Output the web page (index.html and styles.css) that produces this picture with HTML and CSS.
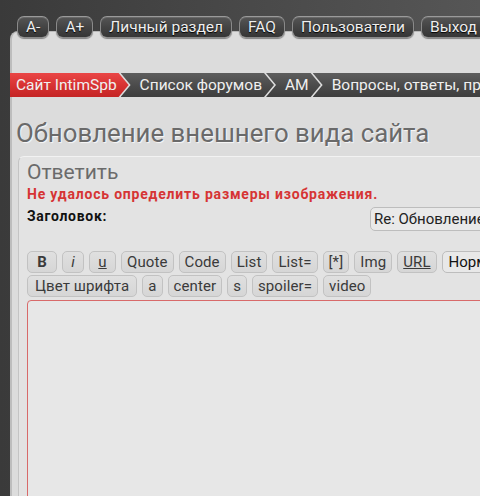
FILE: index.html
```html
<!DOCTYPE html>
<html lang="ru">
<head>
<meta charset="utf-8">
<title>Обновление внешнего вида сайта</title>
<link rel="stylesheet" href="styles.css">
</head>
<body>
<div class="page">
  <nav class="topnav">
    <a class="tab">A-</a>
    <a class="tab">A+</a>
    <a class="tab">Личный раздел</a>
    <a class="tab">FAQ</a>
    <a class="tab">Пользователи</a>
    <a class="tab">Выход</a>
  </nav>
  <div class="panel">
    <div class="crumbs">
      <a class="crumb crumb-home">Сайт IntimSpb</a>
      <a class="crumb">Список форумов</a>
      <a class="crumb">AM</a>
      <a class="crumb">Вопросы, ответы, предложения</a>
    </div>
    <h1 class="title">Обновление внешнего вида сайта</h1>
    <div class="formbox">
      <h2 class="formtitle">Ответить</h2>
      <div class="error">Не удалось определить размеры изображения.</div>
      <div class="field">
        <label class="label">Заголовок:</label>
        <div class="input">Re: Обновление внешнего вида сайта</div>
      </div>
      <div class="toolbar">
        <span class="btn btn-b">B</span>
        <span class="btn btn-i">i</span>
        <span class="btn btn-u">u</span>
        <span class="btn">Quote</span>
        <span class="btn">Code</span>
        <span class="btn">List</span>
        <span class="btn">List=</span>
        <span class="btn">[*]</span>
        <span class="btn">Img</span>
        <span class="btn btn-url">URL</span>
        <span class="select">Нормальный</span>
      </div>
      <div class="toolbar toolbar2">
        <span class="btn btn-wide">Цвет шрифта</span>
        <span class="btn">a</span>
        <span class="btn">center</span>
        <span class="btn">s</span>
        <span class="btn">spoiler=</span>
        <span class="btn">video</span>
      </div>
      <div class="textarea"></div>
    </div>
  </div>
</div>
</body>
</html>
```
FILE: styles.css
```css
html, body {
  margin: 0;
  padding: 0;
  height: 100%;
  overflow: hidden;
}
body {
  font-family: Roboto, "Noto Sans", "DejaVu Sans", sans-serif;
  background: linear-gradient(to right, #3a3a3a 0%, #474747 45%, #565656 100%);
}
.page {
  width: 480px;
  height: 496px;
  overflow: hidden;
}
.topnav {
  position: relative;
  z-index: 2;
  display: flex;
  gap: 7px;
  padding: 16px 0 0 17px;
  white-space: nowrap;
}
.tab {
  flex: none;
  display: block;
  height: 20px;
  line-height: 20px;
  padding: 0 8px;
  font-size: 15.5px;
  color: #efefef;
  text-shadow: 0 1px 1px #000;
  background: linear-gradient(#555 0%, #444 50%, #363636 100%);
  border: 1px solid #8a8a8a;
  border-top-color: #9a9a9a;
  border-radius: 7px;
  box-shadow: inset 0 1px 0 rgba(255,255,255,0.12), 0 1px 1px rgba(0,0,0,0.4);
}
.panel {
  margin: -7px 0 0 10px;
  width: 520px;
  height: 520px;
  background: #dcdcdc;
  border-top: 1px solid #b8b8b8;
  border-left: 2px solid #bdbdbd;
  border-top-left-radius: 8px;
  box-sizing: border-box;
}
.crumbs {
  display: flex;
  margin: 41px 0 0 -2px;
  height: 24px;
  white-space: nowrap;
}
.crumb {
  flex: none;
  display: block;
  height: 24px;
  line-height: 24px;
  font-size: 15.5px;
  color: #f0f0f0;
  padding: 0 12px 0 19px;
  margin-left: -8px;
  background: linear-gradient(#5e5e5e, #4a4a4a 55%, #3e3e3e);
  clip-path: polygon(0 0, calc(100% - 10px) 0, 100% 50%, calc(100% - 10px) 100%, 0 100%, 10px 50%);
}
.crumb-home {
  margin-left: 0;
  padding-left: 6px;
  background: linear-gradient(#ea4646, #d63131 55%, #c42525);
  clip-path: polygon(0 0, calc(100% - 10px) 0, 100% 50%, calc(100% - 10px) 100%, 0 100%);
}
.title {
  margin: 19px 0 0 4px;
  font-size: 25.8px;
  line-height: 34px;
  font-weight: normal;
  color: #6a6a6a;
  text-shadow: 1px 1px 1px rgba(255,255,255,0.8);
  white-space: nowrap;
}
.formbox {
  margin: 6px 0 0 6px;
  padding: 3px 0 0 8px;
  height: 400px;
  background: #e3e3e3;
  border-top: 1px solid #f2f2f2;
  border-left: 1px solid #c4c4c4;
  border-top-left-radius: 6px;
}
.formtitle {
  margin: 0;
  font-size: 21px;
  line-height: 24px;
  font-weight: normal;
  color: #6b6b6b;
}
.error {
  margin-top: 1px;
  font-size: 14px;
  line-height: 18px;
  font-weight: bold;
  letter-spacing: 0.8px;
  color: #d63434;
  white-space: nowrap;
}
.field {
  display: flex;
  align-items: flex-start;
  margin-top: 4px;
}
.label {
  flex: none;
  width: 343px;
  font-size: 14px;
  line-height: 18px;
  font-weight: bold;
  letter-spacing: 0.7px;
  color: #111;
}
.input {
  flex: none;
  height: 22px;
  line-height: 22px;
  padding: 0 3px;
  font-size: 15px;
  color: #222;
  background: #e9e9e9;
  border: 1px solid #bdbdbd;
  border-radius: 5px;
  white-space: nowrap;
}
.toolbar {
  display: flex;
  gap: 5px;
  margin-top: 20px;
  white-space: nowrap;
}
.toolbar2 {
  margin-top: 2px;
}
.btn {
  flex: none;
  height: 20px;
  line-height: 20px;
  padding: 0 5px;
  font-size: 15px;
  letter-spacing: 0.1px;
  color: #3a3a3a;
  text-align: center;
  background: linear-gradient(#e0e0e0, #d6d6d6);
  border: 1px solid #c2c2c2;
  border-radius: 5px;
}
.btn-wide {
  padding: 0 7px;
}
.btn-b {
  width: 18px;
  font-weight: bold;
}
.btn-i {
  width: 10px;
  font-style: italic;
}
.btn-u {
  width: 15px;
  text-decoration: underline;
}
.btn-url {
  text-decoration: underline;
}
.select {
  flex: none;
  height: 20px;
  line-height: 20px;
  padding: 0 6px;
  font-size: 15px;
  color: #111;
  background: #e8e8e8;
  border: 1px solid #bdbdbd;
  border-radius: 5px;
}
.textarea {
  margin-top: 3px;
  height: 300px;
  background: #e7e7e7;
  border: 1px solid #d86a6a;
  border-top-left-radius: 4px;
}
```
